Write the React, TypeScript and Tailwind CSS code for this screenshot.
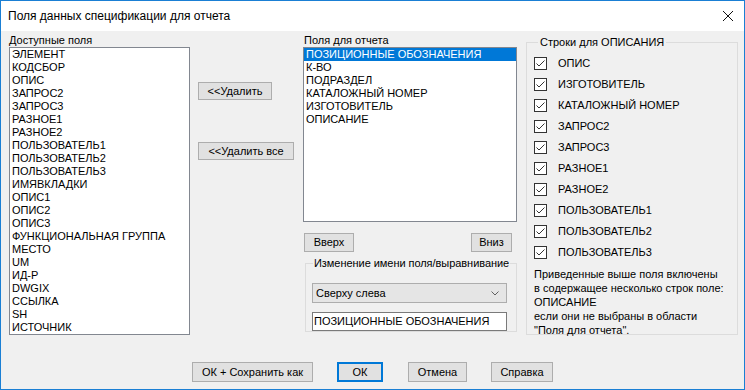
import React from "react";

const available = [
  "ЭЛЕМЕНТ",
  "КОДСБОР",
  "ОПИС",
  "ЗАПРОС2",
  "ЗАПРОС3",
  "РАЗНОЕ1",
  "РАЗНОЕ2",
  "ПОЛЬЗОВАТЕЛЬ1",
  "ПОЛЬЗОВАТЕЛЬ2",
  "ПОЛЬЗОВАТЕЛЬ3",
  "ИМЯВКЛАДКИ",
  "ОПИС1",
  "ОПИС2",
  "ОПИС3",
  "ФУНКЦИОНАЛЬНАЯ ГРУППА",
  "МЕСТО",
  "UM",
  "ИД-Р",
  "DWGIX",
  "ССЫЛКА",
  "SH",
  "ИСТОЧНИК",
];

const report = [
  "ПОЗИЦИОННЫЕ ОБОЗНАЧЕНИЯ",
  "К-ВО",
  "ПОДРАЗДЕЛ",
  "КАТАЛОЖНЫЙ НОМЕР",
  "ИЗГОТОВИТЕЛЬ",
  "ОПИСАНИЕ",
];

const checks = [
  "ОПИС",
  "ИЗГОТОВИТЕЛЬ",
  "КАТАЛОЖНЫЙ НОМЕР",
  "ЗАПРОС2",
  "ЗАПРОС3",
  "РАЗНОЕ1",
  "РАЗНОЕ2",
  "ПОЛЬЗОВАТЕЛЬ1",
  "ПОЛЬЗОВАТЕЛЬ2",
  "ПОЛЬЗОВАТЕЛЬ3",
];

function Btn({ label, w, h = "h-[18px]", primary = false }: { label: string; w: string; h?: string; primary?: boolean }) {
  return (
    <button
      className={`${w} ${h} flex items-center justify-center bg-[#e1e1e1] text-[11px] leading-none text-black ${
        primary ? "border-2 border-[#0078d7]" : "border border-[#adadad]"
      }`}
    >
      {label}
    </button>
  );
}

function CheckBox() {
  return (
    <div className="w-[13px] h-[13px] border border-[#333333] bg-white flex items-center justify-center shrink-0">
      <svg width="11" height="11" viewBox="0 0 11 11">
        <polyline points="1.5,5.5 4,8 9.5,2.5" fill="none" stroke="#333333" strokeWidth="1" />
      </svg>
    </div>
  );
}

export default function App() {
  return (
    <div
      className="w-[745px] h-[390px] border border-[#1a7fd4] bg-[#f0f0f0] flex flex-col text-black overflow-hidden"
      style={{ fontFamily: '"Liberation Sans", Arial, sans-serif' }}
    >
      {/* Title bar */}
      <div className="h-[30px] bg-white flex items-center justify-between pl-[7px] pr-[9px] shrink-0">
        <span className="text-[12px] leading-none">Поля данных спецификации для отчета</span>
        <svg width="12" height="12" viewBox="0 0 12 12" className="mr-[1px]">
          <path d="M1 1 L11 11 M11 1 L1 11" stroke="#111" strokeWidth="1" fill="none" />
        </svg>
      </div>

      {/* Main content */}
      <div className="flex items-start pl-[8px] text-[11px]">
        {/* Available fields */}
        <div className="flex flex-col w-[181px]">
          <div className="h-[16px] leading-[16px] pt-[1px]">Доступные поля</div>
          <div className="h-[288px] border border-[#828790] bg-white pl-[2px] overflow-hidden">
            {available.map((a) => (
              <div key={a} className="leading-[13px] h-[13px] whitespace-nowrap">
                {a}
              </div>
            ))}
          </div>
        </div>

        {/* Remove buttons */}
        <div className="flex flex-col ml-[8px] mt-[51px] w-[96px]">
          <Btn label="<<Удалить" w="w-[74px]" />
          <div className="mt-[42px]">
            <Btn label="<<Удалить все" w="w-[96px]" />
          </div>
        </div>

        {/* Report fields */}
        <div className="flex flex-col ml-[9px] w-[214px]">
          <div className="h-[16px] leading-[16px] pt-[1px] pl-[1px]">Поля для отчета</div>
          <div className="h-[175px] border border-[#828790] bg-white overflow-hidden">
            {report.map((r, i) => (
              <div
                key={r}
                className={`leading-[13px] h-[13px] pl-[2px] whitespace-nowrap ${
                  i === 0 ? "bg-[#0078d7] text-white" : ""
                }`}
              >
                {r}
              </div>
            ))}
          </div>
          <div className="flex justify-between mt-[11px] pl-[1px] pr-[5px]">
            <Btn label="Вверх" w="w-[50px]" h="h-[19px]" />
            <Btn label="Вниз" w="w-[41px]" h="h-[19px]" />
          </div>
          <fieldset className="ml-[2px] mt-[4px] w-[212px] min-w-0 h-[76px] border border-[#dcdcdc] pl-[6px] pr-[9px]">
            <legend className="px-[1px] ml-[1px] leading-[14px] whitespace-nowrap tracking-[-0.05px]">
              Изменение имени поля/выравнивание
            </legend>
            <div className="mt-[13px] h-[20px] border border-[#adadad] bg-[#e5e5e5] flex items-center justify-between pl-[3px] pr-[7px]">
              <span>Сверху слева</span>
              <svg width="8" height="5" viewBox="0 0 8 5">
                <polyline points="0.5,0.5 4,4 7.5,0.5" fill="none" stroke="#606060" strokeWidth="1" />
              </svg>
            </div>
            <div className="mt-[9px] h-[19px] border border-[#7a7a7a] bg-white flex items-center pl-[1px] whitespace-nowrap overflow-hidden">
              ПОЗИЦИОННЫЕ ОБОЗНАЧЕНИЯ
            </div>
          </fieldset>
        </div>

        {/* Description lines */}
        <fieldset className="ml-[9px] mt-[4px] w-[212px] min-w-0 h-[300px] border border-[#dcdcdc] pl-[7px]">
          <legend className="px-[2px] ml-[4px] leading-[14px]">Строки для ОПИСАНИЯ</legend>
          <div className="flex flex-col pt-[4px]">
            {checks.map((c) => (
              <div key={c} className="h-[21px] flex items-center">
                <CheckBox />
                <span className="ml-[11px] whitespace-nowrap">{c}</span>
              </div>
            ))}
          </div>
          <p className="mt-[4px] leading-[14px]">
            Приведенные выше поля включены
            <br />в содержащее несколько строк поле:
            <br />
            ОПИСАНИЕ
            <br />
            если они не выбраны в области
            <br />
            "Поля для отчета".
          </p>
        </fieldset>
      </div>

      {/* Bottom buttons */}
      <div className="flex items-center pl-[191px] mt-[27px]">
        <Btn label="ОК + Сохранить как" w="w-[121px]" h="h-[20px]" />
        <div className="ml-[24px]">
          <Btn label="ОК" w="w-[46px]" h="h-[20px]" primary />
        </div>
        <div className="ml-[25px]">
          <Btn label="Отмена" w="w-[59px]" h="h-[20px]" />
        </div>
        <div className="ml-[24px]">
          <Btn label="Справка" w="w-[62px]" h="h-[20px]" />
        </div>
      </div>
    </div>
  );
}
